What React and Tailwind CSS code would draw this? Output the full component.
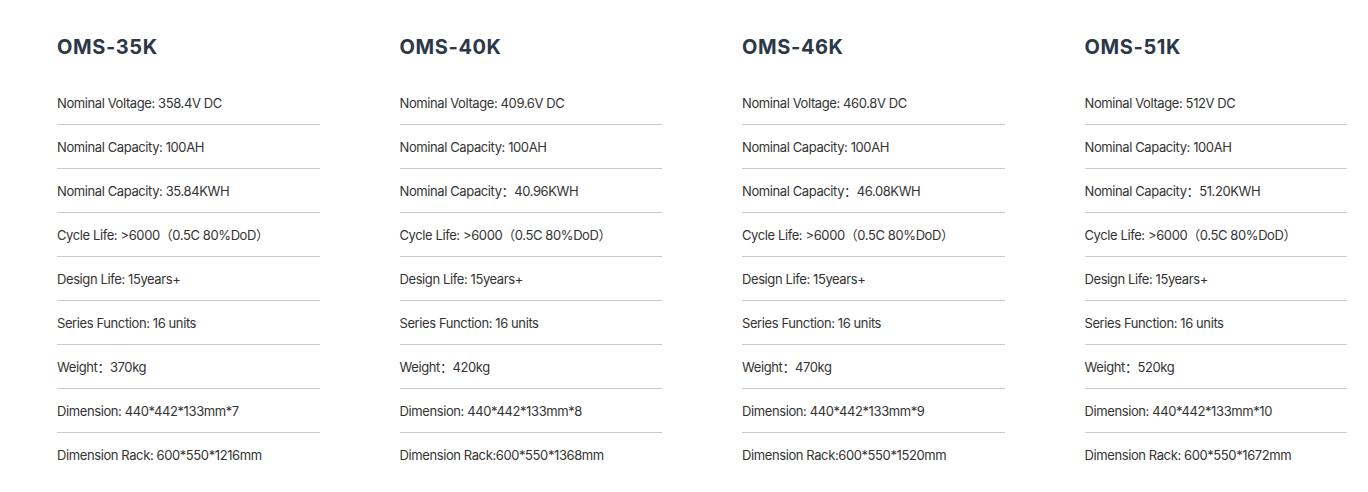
const models = [
  {
    name: 'OMS-35K',
    specs: [
      'Nominal Voltage: 358.4V DC',
      'Nominal Capacity: 100AH',
      'Nominal Capacity: 35.84KWH',
      'Cycle Life: >6000（0.5C 80%DoD）',
      'Design Life: 15years+',
      'Series Function: 16 units',
      'Weight：370kg',
      'Dimension: 440*442*133mm*7',
      'Dimension Rack: 600*550*1216mm',
    ],
  },
  {
    name: 'OMS-40K',
    specs: [
      'Nominal Voltage: 409.6V DC',
      'Nominal Capacity: 100AH',
      'Nominal Capacity：40.96KWH',
      'Cycle Life: >6000（0.5C 80%DoD）',
      'Design Life: 15years+',
      'Series Function: 16 units',
      'Weight：420kg',
      'Dimension: 440*442*133mm*8',
      'Dimension Rack:600*550*1368mm',
    ],
  },
  {
    name: 'OMS-46K',
    specs: [
      'Nominal Voltage: 460.8V DC',
      'Nominal Capacity: 100AH',
      'Nominal Capacity：46.08KWH',
      'Cycle Life: >6000（0.5C 80%DoD）',
      'Design Life: 15years+',
      'Series Function: 16 units',
      'Weight：470kg',
      'Dimension: 440*442*133mm*9',
      'Dimension Rack:600*550*1520mm',
    ],
  },
  {
    name: 'OMS-51K',
    specs: [
      'Nominal Voltage: 512V DC',
      'Nominal Capacity: 100AH',
      'Nominal Capacity：51.20KWH',
      'Cycle Life: >6000（0.5C 80%DoD）',
      'Design Life: 15years+',
      'Series Function: 16 units',
      'Weight：520kg',
      'Dimension: 440*442*133mm*10',
      'Dimension Rack: 600*550*1672mm',
    ],
  },
];

export default function App() {
  return (
    <div className="w-[1368px] h-[492px] bg-white font-['Inter','Noto_Sans_CJK_SC',sans-serif]">
      <div className="grid grid-cols-4 gap-x-[80px] pl-[57px] pr-[21px] pt-[34px]">
        {models.map((m) => (
          <div key={m.name}>
            <h2 className="text-[20px] leading-[26px] font-bold text-[#2b3848] tracking-[0.03em] mb-[21px]">
              {m.name}
            </h2>
            <ul>
              {m.specs.map((s, i) => (
                <li
                  key={i}
                  className={
                    'h-[44px] flex items-center pt-[2px] text-[13px] tracking-[-0.4px] text-[#333333] ' +
                    (i < m.specs.length - 1 ? 'border-b border-[#c8c8c8]' : '')
                  }
                >
                  {s}
                </li>
              ))}
            </ul>
          </div>
        ))}
      </div>
    </div>
  );
}
